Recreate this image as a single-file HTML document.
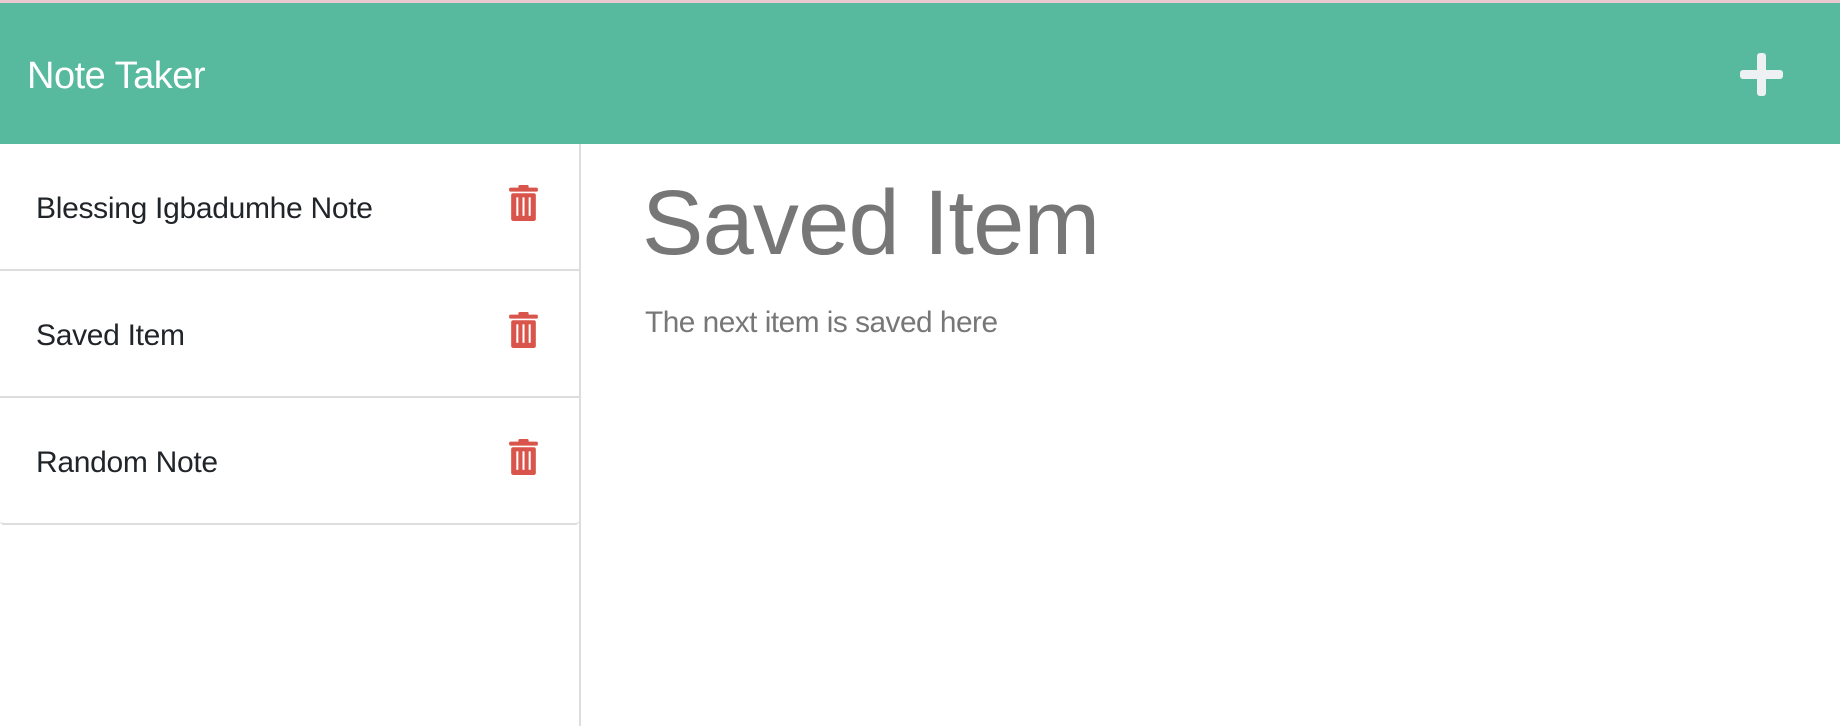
<!DOCTYPE html>
<html><head><style>
*{margin:0;padding:0;box-sizing:border-box}
body{width:1840px;height:726px;overflow:hidden;background:#fff;font-family:"Liberation Sans",sans-serif;position:relative}
.top{position:absolute;left:0;top:0;width:1840px;height:3px;background:#e9c9cf}
.hdr{position:absolute;left:0;top:3px;width:1840px;height:141px;background:#57ba9e}
.title{position:absolute;left:27px;top:54px;font-size:38px;color:#fff;line-height:1;letter-spacing:-0.5px}
.plus{position:absolute;left:1740px;top:50px;width:43px;height:43px}
.plus:before{content:"";position:absolute;left:0;top:17px;width:43px;height:9px;background:#edf1f2;border-radius:3px}
.plus:after{content:"";position:absolute;left:17px;top:0;width:9px;height:43px;background:#edf1f2;border-radius:3px}
.side{position:absolute;left:0;top:144px;width:581px;height:582px;border-right:2px solid #ddd}
.row{position:absolute;left:0;width:579px;height:127px;border-bottom:2px solid #ddd}
.row span{position:absolute;left:36px;top:50px;font-size:30px;color:#212529;line-height:1;letter-spacing:-0.3px}
.row svg{position:absolute;left:508px;top:41px}
.last{border-bottom-left-radius:4px;border-bottom-right-radius:4px}
h1{position:absolute;left:642px;top:177px;font-size:92px;font-weight:normal;color:#777;line-height:1;letter-spacing:-0.8px}
p{position:absolute;left:645px;top:308px;font-size:29.8px;color:#777;line-height:1;letter-spacing:-0.5px}
</style></head><body>
<div class="top"></div>
<div class="hdr"><div class="title">Note Taker</div><div class="plus"></div></div>
<div class="side">
<div class="row" style="top:0"><span>Blessing Igbadumhe Note</span>
<svg width="31" height="37" viewBox="0 0 28 36"><rect x="9" y="0" width="10" height="4" rx="1.5" fill="#d9544a"/><rect x="0" y="2.5" width="28" height="4" rx="1.5" fill="#d9544a"/><rect x="2" y="8" width="24" height="27" rx="2" fill="#d9544a"/><rect x="7" y="12" width="2" height="18" fill="#fff"/><rect x="13" y="12" width="2" height="18" fill="#fff"/><rect x="19" y="12" width="2" height="18" fill="#fff"/></svg></div>
<div class="row" style="top:127px"><span>Saved Item</span>
<svg width="31" height="37" viewBox="0 0 28 36"><rect x="9" y="0" width="10" height="4" rx="1.5" fill="#d9544a"/><rect x="0" y="2.5" width="28" height="4" rx="1.5" fill="#d9544a"/><rect x="2" y="8" width="24" height="27" rx="2" fill="#d9544a"/><rect x="7" y="12" width="2" height="18" fill="#fff"/><rect x="13" y="12" width="2" height="18" fill="#fff"/><rect x="19" y="12" width="2" height="18" fill="#fff"/></svg></div>
<div class="row last" style="top:254px"><span>Random Note</span>
<svg width="31" height="37" viewBox="0 0 28 36"><rect x="9" y="0" width="10" height="4" rx="1.5" fill="#d9544a"/><rect x="0" y="2.5" width="28" height="4" rx="1.5" fill="#d9544a"/><rect x="2" y="8" width="24" height="27" rx="2" fill="#d9544a"/><rect x="7" y="12" width="2" height="18" fill="#fff"/><rect x="13" y="12" width="2" height="18" fill="#fff"/><rect x="19" y="12" width="2" height="18" fill="#fff"/></svg></div>
</div>
<h1>Saved Item</h1>
<p>The next item is saved here</p>
</body></html>
